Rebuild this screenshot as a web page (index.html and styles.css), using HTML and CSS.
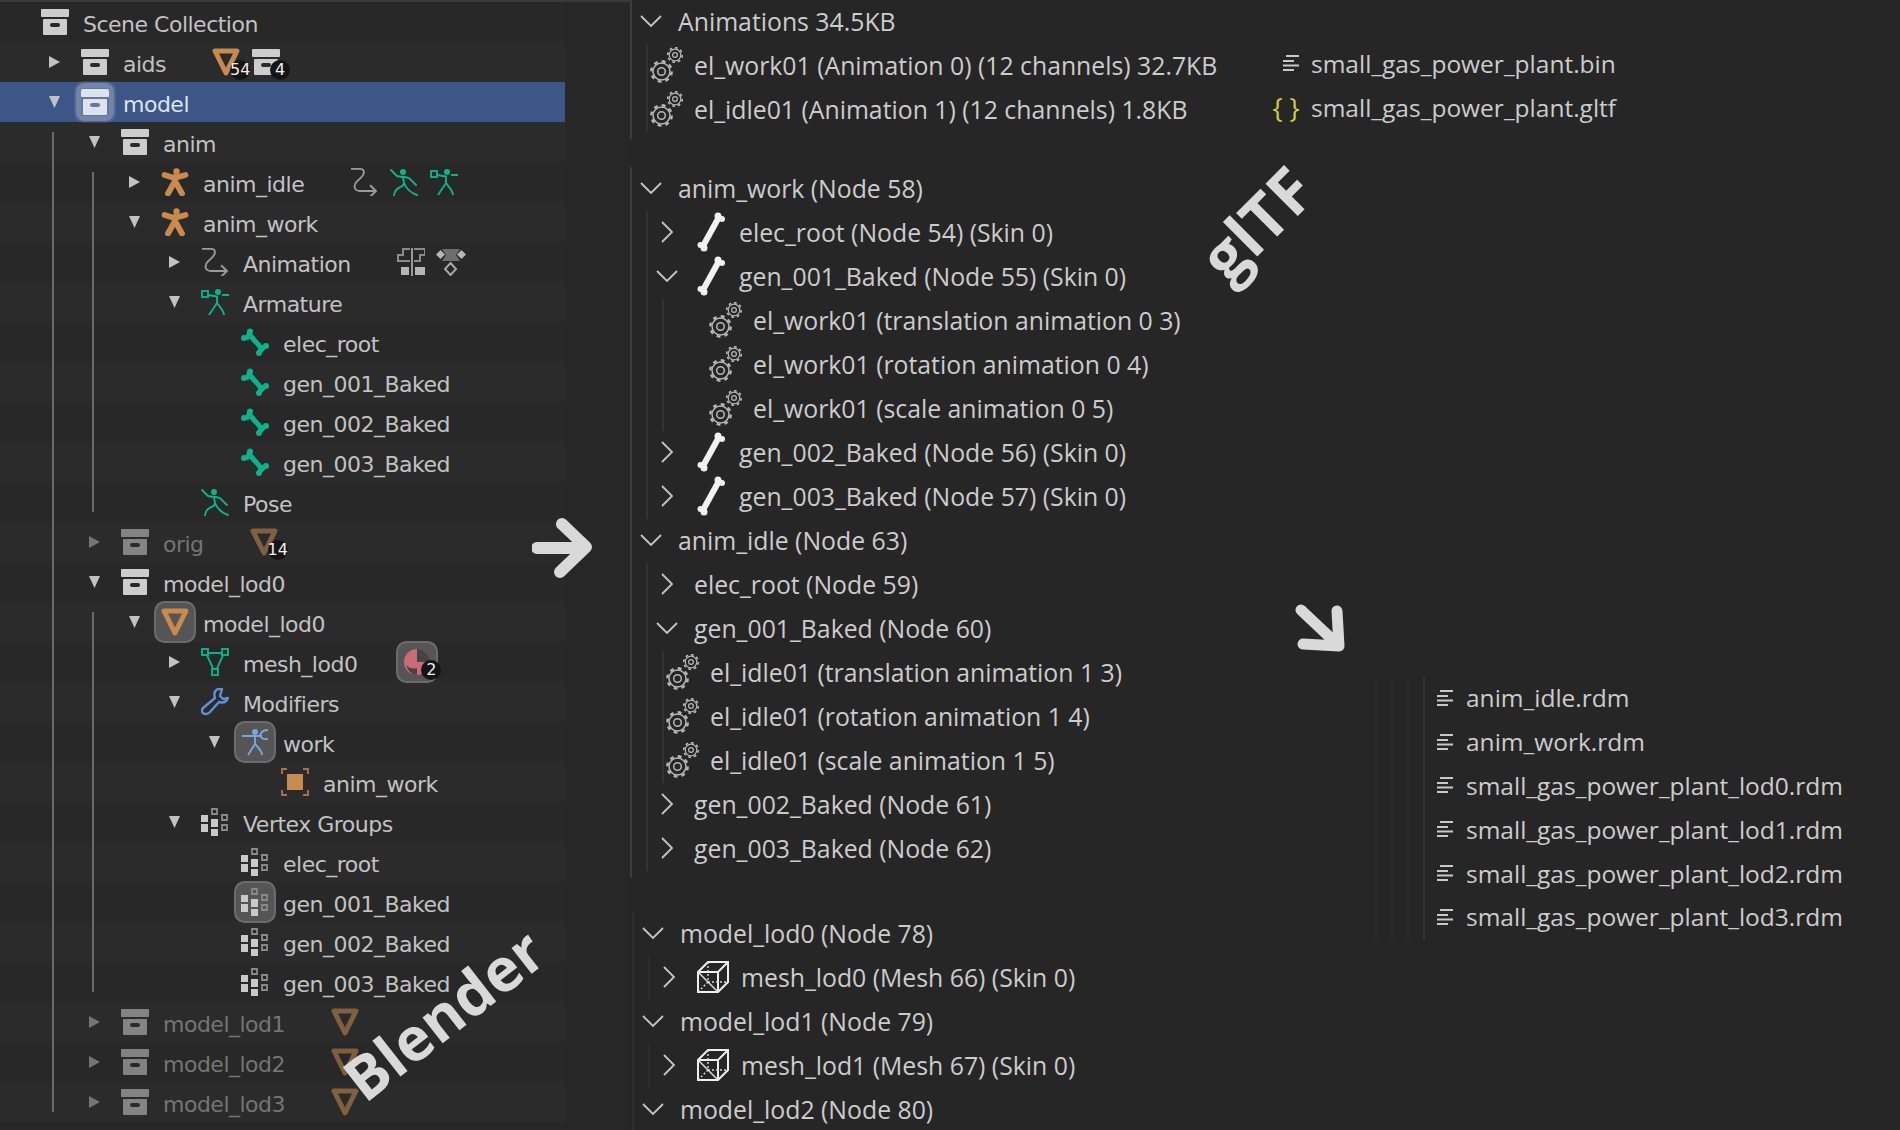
FILE: index.html
```html
<!DOCTYPE html>
<html lang="en">
<head>
    <meta charset="UTF-8">
    <title>Blender and glTF hierarchy</title>
    <link rel="stylesheet" href="styles.css">
</head>
<body>
    <svg class="defs" width="0" height="0">
        <symbol id="coll" viewBox="0 0 28 28">
            <rect x="0" y="1" width="28" height="8" rx="1" fill="currentColor"/>
            <path fill="currentColor" fill-rule="evenodd" d="M3 11H25a1 1 0 0 1 1 1V26a1 1 0 0 1-1 1H3a1 1 0 0 1-1-1V12a1 1 0 0 1 1-1ZM11 15a1.5 1.5 0 0 0 0 4h6a1.5 1.5 0 0 0 0-4Z"/>
        </symbol>
        <symbol id="obj" viewBox="0 0 28 28">
            <path d="M3 3H25L14 25Z" fill="none" stroke="#c98a4f" stroke-width="5" stroke-linejoin="round"/>
        </symbol>
        <symbol id="arm" viewBox="0 0 28 28">
            <circle cx="15.500" cy="3.500" r="3.200" fill="#c98a4f"/>
            <path d="M3.500 7L13.500 10L24.500 7M14 9V13L7 25.500M14 13L21 25.500" fill="none" stroke="#c98a4f" stroke-width="5.800" stroke-linecap="round" stroke-linejoin="round"/>
        </symbol>
        <symbol id="action" viewBox="0 0 28 28">
            <path d="M1 2H10C15 2 15 7 11 11L7 15C3 19 4 25 10 25H26M20 19L26 25L20 31" fill="none" stroke="#9a9a9a" stroke-width="1.9" stroke-linejoin="round" transform="translate(0 -1) scale(1 .96)"/>
        </symbol>
        <symbol id="pose" viewBox="0 0 28 28">
            <circle cx="13" cy="4" r="3" fill="#0cb38c"/>
            <path d="M1 2L7 8L12 9L15 9L19 10L26 17M13 9L14 15C14 19 10 18 6 22C5 24 4 25 4 28M14 15C17 22 21 25 27 27" fill="none" stroke="#0cb38c" stroke-width="1.9" stroke-linecap="round"/>
        </symbol>
        <symbol id="armdata" viewBox="0 0 28 28">
            <circle cx="17" cy="4" r="3" fill="#0cb38c"/>
            <rect x="1" y="3" width="6" height="6" fill="none" stroke="#0cb38c" stroke-width="1.9"/>
            <path d="M7 7L16 8.500M21 7H28M16 8V15L8 27M16 15C20 20 23 23 23 27" fill="none" stroke="#0cb38c" stroke-width="1.9"/>
        </symbol>
        <symbol id="bone" viewBox="0 0 28 28">
            <path d="M8 6L21 21" stroke="#0cb38c" stroke-width="5" stroke-linecap="round"/>
            <circle cx="9" cy="3.500" r="3" fill="#0cb38c"/>
            <circle cx="3" cy="10" r="3" fill="#0cb38c"/>
            <circle cx="25" cy="18" r="3" fill="#0cb38c"/>
            <circle cx="18" cy="25" r="3" fill="#0cb38c"/>
            <path d="M5 11L10 5" stroke="#0cb38c" stroke-width="5"/>
            <path d="M18 24L24 18" stroke="#0cb38c" stroke-width="5"/>
        </symbol>
        <symbol id="nla" viewBox="0 0 28 28">
            <path d="M15 0V28" stroke="#9a9a9a" stroke-width="2"/>
            <path d="M13 1H6V7H1V13H13M17 1H28V7H23V13H17" fill="none" stroke="#8a8a8a" stroke-width="2"/>
            <rect x="4" y="19" width="8" height="8" fill="#b5b5b5"/>
            <rect x="18" y="19" width="10" height="8" fill="#b5b5b5"/>
        </symbol>
        <symbol id="keys" viewBox="0 0 32 28">
            <path d="M7 1H25L21 7L25 13H7L11 7Z" fill="#6e6e6e"/>
            <path d="M5.500 2L10 6.500L5.500 11L1 6.500ZM26.500 2L31 6.500L26.500 11L22 6.500Z" fill="#b5b5b5"/>
            <path d="M15.500 15L21 21L15.500 27L10 21Z" fill="none" stroke="#a8a8a8" stroke-width="2"/>
        </symbol>
        <symbol id="mesh" viewBox="0 0 28 28">
            <path d="M5 5H23L14 25Z" fill="none" stroke="#0cb38c" stroke-width="1.900"/>
            <rect x="1" y="1" width="6" height="6" fill="#2a2a2a" stroke="#0cb38c" stroke-width="1.900"/>
            <rect x="21" y="1" width="6" height="6" fill="#2a2a2a" stroke="#0cb38c" stroke-width="1.900"/>
            <rect x="11" y="21" width="6" height="6" fill="#2a2a2a" stroke="#0cb38c" stroke-width="1.900"/>
        </symbol>
        <symbol id="wrench" viewBox="0 0 28 28">
            <path d="M17 2C13 4 13 8 14 11L2 21C0 24 1 27 5 27C7 27 8 26 9 25L18 15C21 16 25 16 27 11L22 12L19 9L21 2Z" fill="none" stroke="#5f91d3" stroke-width="2.400" stroke-linejoin="round" transform="translate(0 -1)"/>
        </symbol>
        <symbol id="armmod" viewBox="0 0 28 28">
            <circle cx="14" cy="4" r="3" fill="#7aa6de"/>
            <path d="M1 8H14M14 7V16L7 27M14 16C18 20 21 23 21 27" fill="none" stroke="#7aa6de" stroke-width="1.900"/>
            <path d="M27 2C21 2 18 6 20 9C22 12 25 11 27 11M14 8H21" fill="none" stroke="#7aa6de" stroke-width="1.900"/>
        </symbol>
        <symbol id="select" viewBox="0 0 28 28">
            <rect x="6" y="6" width="16" height="16" fill="#c98a4f"/>
            <path d="M1 6V1H6M22 1H27V6M27 22V27H22M6 27H1V22" fill="none" stroke="#a8734a" stroke-width="1.900"/>
        </symbol>
        <symbol id="vgroup" viewBox="0 0 28 28">
            <path fill="#c9c9c9" d="M0 7h7v7H0ZM0 16h7v8H0ZM10 11h7v8h-7ZM10 21h7v7h-7Z"/>
            <path fill="none" stroke="#8a8a8a" stroke-width="1.800" d="M11 1h5v5h-5ZM21 7h5v5h-5ZM21 17h5v5h-5Z"/>
        </symbol>
        <symbol id="mat" viewBox="0 0 28 28">
            <circle cx="14" cy="14" r="13" fill="#cb6a78"/>
            <path d="M14 1A13 13 0 0 1 27 14H14Z" fill="#444"/>
            <path d="M3 17C7 21 10 21 14 20V27C9 27 5 23 3 17Z" fill="#444"/>
        </symbol>
        <symbol id="wbone" viewBox="0 0 28 40">
            <path d="M22 5L6 34" stroke="#f2f2f2" stroke-width="6"/>
            <circle cx="21" cy="4" r="3.500" fill="#f2f2f2"/>
            <circle cx="25" cy="7" r="3" fill="#f2f2f2"/>
            <circle cx="3.500" cy="33" r="3" fill="#f2f2f2"/>
            <circle cx="7" cy="36" r="3.500" fill="#f2f2f2"/>
        </symbol>
        <symbol id="gears" viewBox="0 0 33 36">
            <g fill="none" stroke="#b8b8b8">
                <circle cx="11.500" cy="24.500" r="8.500" stroke-width="1.500"/>
                <circle cx="11.500" cy="24.500" r="3.800" stroke-width="1.500"/>
                <circle cx="11.500" cy="24.500" r="10.200" stroke-width="2.400" stroke-dasharray="3.800 4.200"/>
                <circle cx="25" cy="8" r="5.800" stroke-width="1.200"/>
                <circle cx="25" cy="8" r="2.400" stroke-width="1.200"/>
                <circle cx="25" cy="8" r="7.300" stroke-width="1.600" stroke-dasharray="2.700 3"/>
            </g>
        </symbol>
        <symbol id="cube" viewBox="0 0 32 32">
            <path d="M1 11L11 1H31V21L21 31H1ZM1 11H21V31M21 11L31 1" fill="none" stroke="#efefef" stroke-width="2"/>
            <path d="M1 11L21 31" fill="none" stroke="#e0e0e0" stroke-width="1.500"/>
            <path d="M11 1V21L1 31M11 21H31" fill="none" stroke="#d8d8d8" stroke-width="1.400" stroke-dasharray="2 2"/>
        </symbol>
        <symbol id="lines" viewBox="0 0 18 18">
            <path d="M4 2H17M1 7H12M1 11.500H17M1 16H12" fill="none" stroke="#c9c9c9" stroke-width="2"/>
        </symbol>
        <symbol id="chev-down" viewBox="0 0 22 12"><path d="M1 1L11 11L21 1" fill="none" stroke="#c5c5c5" stroke-width="1.800"/></symbol>
        <symbol id="chev-right" viewBox="0 0 12 22"><path d="M1 1L11 11L1 21" fill="none" stroke="#c5c5c5" stroke-width="1.800"/></symbol>
    </svg>

    <div class="page">
        <div class="outliner">
            <div class="row lv0"><span class="slot"></span><svg class="ico"><use href="#coll"/></svg><span class="name">Scene Collection</span></div>
            <div class="row lv1"><span class="slot"><i class="tri"></i></span><svg class="ico"><use href="#coll"/></svg><span class="name">aids</span>
                <span class="extras">
                    <span class="extra"><svg class="ico"><use href="#obj"/></svg><b class="badge">54</b></span>
                    <span class="extra"><svg class="ico"><use href="#coll"/></svg><b class="badge">4</b></span>
                </span></div>
            <div class="row lv1 selected"><span class="slot"><i class="tri down"></i></span><svg class="ico hl"><use href="#coll"/></svg><span class="name">model</span></div>
            <div class="row lv2"><span class="slot"><i class="tri down"></i></span><svg class="ico"><use href="#coll"/></svg><span class="name">anim</span></div>
            <div class="row lv3"><span class="slot"><i class="tri"></i></span><svg class="ico"><use href="#arm"/></svg><span class="name">anim_idle</span>
                <span class="extras">
                    <svg class="ico"><use href="#action"/></svg>
                    <svg class="ico"><use href="#pose"/></svg>
                    <svg class="ico"><use href="#armdata"/></svg>
                </span></div>
            <div class="row lv3"><span class="slot"><i class="tri down"></i></span><svg class="ico"><use href="#arm"/></svg><span class="name">anim_work</span></div>
            <div class="row lv4"><span class="slot"><i class="tri"></i></span><svg class="ico"><use href="#action"/></svg><span class="name">Animation</span>
                <span class="extras">
                    <svg class="ico"><use href="#nla"/></svg>
                    <svg class="ico wide"><use href="#keys"/></svg>
                </span></div>
            <div class="row lv4"><span class="slot"><i class="tri down"></i></span><svg class="ico"><use href="#armdata"/></svg><span class="name">Armature</span></div>
            <div class="row lv5"><span class="slot"></span><svg class="ico"><use href="#bone"/></svg><span class="name">elec_root</span></div>
            <div class="row lv5"><span class="slot"></span><svg class="ico"><use href="#bone"/></svg><span class="name">gen_001_Baked</span></div>
            <div class="row lv5"><span class="slot"></span><svg class="ico"><use href="#bone"/></svg><span class="name">gen_002_Baked</span></div>
            <div class="row lv5"><span class="slot"></span><svg class="ico"><use href="#bone"/></svg><span class="name">gen_003_Baked</span></div>
            <div class="row lv4"><span class="slot"></span><svg class="ico"><use href="#pose"/></svg><span class="name">Pose</span></div>
            <div class="row lv2 dim"><span class="slot"><i class="tri"></i></span><svg class="ico"><use href="#coll"/></svg><span class="name">orig</span>
                <span class="extras">
                    <span class="extra"><svg class="ico"><use href="#obj"/></svg><b class="badge">14</b></span>
                </span></div>
            <div class="row lv2"><span class="slot"><i class="tri down"></i></span><svg class="ico"><use href="#coll"/></svg><span class="name">model_lod0</span></div>
            <div class="row lv3"><span class="slot"><i class="tri down"></i></span><svg class="ico hl grey"><use href="#obj"/></svg><span class="name">model_lod0</span></div>
            <div class="row lv4"><span class="slot"><i class="tri"></i></span><svg class="ico"><use href="#mesh"/></svg><span class="name">mesh_lod0</span>
                <span class="extras">
                    <span class="extra"><svg class="ico hl grey"><use href="#mat"/></svg><b class="badge">2</b></span>
                </span></div>
            <div class="row lv4"><span class="slot"><i class="tri down"></i></span><svg class="ico"><use href="#wrench"/></svg><span class="name">Modifiers</span></div>
            <div class="row lv5"><span class="slot"><i class="tri down"></i></span><svg class="ico hl grey"><use href="#armmod"/></svg><span class="name">work</span></div>
            <div class="row lv6"><span class="slot"></span><svg class="ico"><use href="#select"/></svg><span class="name">anim_work</span></div>
            <div class="row lv4"><span class="slot"><i class="tri down"></i></span><svg class="ico"><use href="#vgroup"/></svg><span class="name">Vertex Groups</span></div>
            <div class="row lv5"><span class="slot"></span><svg class="ico"><use href="#vgroup"/></svg><span class="name">elec_root</span></div>
            <div class="row lv5"><span class="slot"></span><svg class="ico hl grey"><use href="#vgroup"/></svg><span class="name">gen_001_Baked</span></div>
            <div class="row lv5"><span class="slot"></span><svg class="ico"><use href="#vgroup"/></svg><span class="name">gen_002_Baked</span></div>
            <div class="row lv5"><span class="slot"></span><svg class="ico"><use href="#vgroup"/></svg><span class="name">gen_003_Baked</span></div>
            <div class="row lv2 dim"><span class="slot"><i class="tri"></i></span><svg class="ico"><use href="#coll"/></svg><span class="name">model_lod1</span><span class="extras"><svg class="ico"><use href="#obj"/></svg></span></div>
            <div class="row lv2 dim"><span class="slot"><i class="tri"></i></span><svg class="ico"><use href="#coll"/></svg><span class="name">model_lod2</span><span class="extras"><svg class="ico"><use href="#obj"/></svg></span></div>
            <div class="row lv2 dim"><span class="slot"><i class="tri"></i></span><svg class="ico"><use href="#coll"/></svg><span class="name">model_lod3</span><span class="extras"><svg class="ico"><use href="#obj"/></svg></span></div>

            <div class="guide g-model"></div>
            <div class="guide g-anim"></div>
            <div class="guide g-lod0"></div>
        </div>

        <div class="viewer">
            <div class="col-tree">
                <div class="tree sec-anims">
                    <div class="vrow"><span class="chev"><svg class="chevron"><use href="#chev-down"/></svg></span><span>Animations 34.5KB</span></div>
                    <div class="kids">
                        <div class="vrow"><svg class="gears"><use href="#gears"/></svg><span>el_work01 (Animation 0) (12 channels) 32.7KB</span></div>
                        <div class="vrow"><svg class="gears"><use href="#gears"/></svg><span>el_idle01 (Animation 1) (12 channels) 1.8KB</span></div>
                    </div>
                </div>

                <div class="tree sec-nodes">
                    <div class="vrow"><span class="chev"><svg class="chevron"><use href="#chev-down"/></svg></span><span>anim_work (Node 58)</span></div>
                    <div class="kids">
                        <div class="vrow"><span class="chev"><svg class="chevron"><use href="#chev-right"/></svg></span><span class="vico"><svg class="wbone"><use href="#wbone"/></svg></span><span>elec_root (Node 54) (Skin 0)</span></div>
                        <div class="vrow"><span class="chev"><svg class="chevron"><use href="#chev-down"/></svg></span><span class="vico"><svg class="wbone"><use href="#wbone"/></svg></span><span>gen_001_Baked (Node 55) (Skin 0)</span></div>
                        <div class="kids deep">
                            <div class="vrow"><svg class="gears"><use href="#gears"/></svg><span>el_work01 (translation animation 0 3)</span></div>
                            <div class="vrow"><svg class="gears"><use href="#gears"/></svg><span>el_work01 (rotation animation 0 4)</span></div>
                            <div class="vrow"><svg class="gears"><use href="#gears"/></svg><span>el_work01 (scale animation 0 5)</span></div>
                        </div>
                        <div class="vrow"><span class="chev"><svg class="chevron"><use href="#chev-right"/></svg></span><span class="vico"><svg class="wbone"><use href="#wbone"/></svg></span><span>gen_002_Baked (Node 56) (Skin 0)</span></div>
                        <div class="vrow"><span class="chev"><svg class="chevron"><use href="#chev-right"/></svg></span><span class="vico"><svg class="wbone"><use href="#wbone"/></svg></span><span>gen_003_Baked (Node 57) (Skin 0)</span></div>
                    </div>
                    <div class="vrow"><span class="chev"><svg class="chevron"><use href="#chev-down"/></svg></span><span>anim_idle (Node 63)</span></div>
                    <div class="kids">
                        <div class="vrow"><span class="chev"><svg class="chevron"><use href="#chev-right"/></svg></span><span>elec_root (Node 59)</span></div>
                        <div class="vrow"><span class="chev"><svg class="chevron"><use href="#chev-down"/></svg></span><span>gen_001_Baked (Node 60)</span></div>
                        <div class="kids">
                            <div class="vrow"><svg class="gears"><use href="#gears"/></svg><span>el_idle01 (translation animation 1 3)</span></div>
                            <div class="vrow"><svg class="gears"><use href="#gears"/></svg><span>el_idle01 (rotation animation 1 4)</span></div>
                            <div class="vrow"><svg class="gears"><use href="#gears"/></svg><span>el_idle01 (scale animation 1 5)</span></div>
                        </div>
                        <div class="vrow"><span class="chev"><svg class="chevron"><use href="#chev-right"/></svg></span><span>gen_002_Baked (Node 61)</span></div>
                        <div class="vrow"><span class="chev"><svg class="chevron"><use href="#chev-right"/></svg></span><span>gen_003_Baked (Node 62)</span></div>
                    </div>
                </div>

                <div class="tree sec-models">
                    <div class="vrow"><span class="chev"><svg class="chevron"><use href="#chev-down"/></svg></span><span>model_lod0 (Node 78)</span></div>
                    <div class="kids">
                        <div class="vrow"><span class="chev"><svg class="chevron"><use href="#chev-right"/></svg></span><span class="vico"><svg class="cube"><use href="#cube"/></svg></span><span>mesh_lod0 (Mesh 66) (Skin 0)</span></div>
                    </div>
                    <div class="vrow"><span class="chev"><svg class="chevron"><use href="#chev-down"/></svg></span><span>model_lod1 (Node 79)</span></div>
                    <div class="kids">
                        <div class="vrow"><span class="chev"><svg class="chevron"><use href="#chev-right"/></svg></span><span class="vico"><svg class="cube"><use href="#cube"/></svg></span><span>mesh_lod1 (Mesh 67) (Skin 0)</span></div>
                    </div>
                    <div class="vrow"><span class="chev"><svg class="chevron"><use href="#chev-down"/></svg></span><span>model_lod2 (Node 80)</span></div>
                </div>
            </div>

            <div class="col-files">
                <div class="files-top">
                    <div class="vrow"><span class="fico"><svg class="lines"><use href="#lines"/></svg></span><span>small_gas_power_plant.bin</span></div>
                    <div class="vrow"><span class="fico braces">{&nbsp;}</span><span>small_gas_power_plant.gltf</span></div>
                </div>
                <div class="files-rdm">
                    <div class="indent"><div class="indent"><div class="indent"><div class="indent last">
                        <div class="frow"><svg class="lines"><use href="#lines"/></svg><span>anim_idle.rdm</span></div>
                        <div class="frow"><svg class="lines"><use href="#lines"/></svg><span>anim_work.rdm</span></div>
                        <div class="frow"><svg class="lines"><use href="#lines"/></svg><span>small_gas_power_plant_lod0.rdm</span></div>
                        <div class="frow"><svg class="lines"><use href="#lines"/></svg><span>small_gas_power_plant_lod1.rdm</span></div>
                        <div class="frow"><svg class="lines"><use href="#lines"/></svg><span>small_gas_power_plant_lod2.rdm</span></div>
                        <div class="frow"><svg class="lines"><use href="#lines"/></svg><span>small_gas_power_plant_lod3.rdm</span></div>
                    </div></div></div></div>
                </div>
            </div>
        </div>

        <!-- hand added labels on top of the screenshots -->
        <div class="note note-blender">Blender</div>
        <div class="note note-gltf">glTF</div>
        <svg class="arrow arrow-right" viewBox="0 0 60 60"><path d="M5 30H52M30 6L54 29L28 54"/></svg>
        <svg class="arrow arrow-down" viewBox="0 0 50 50"><path d="M6 6L41 39M42 7L44 42L8 40"/></svg>
    </div>
</body>
</html>
```
FILE: styles.css
```css
* {
    box-sizing: border-box;
}
html, body {
    margin: 0;
    height: 100%;
    overflow: hidden;
    background: #262626;
}
.defs {
    position: absolute;
}
.page {
    position: relative;
    display: flex;
    height: 1130px;
    overflow: hidden;
}

/* blender outliner */
.outliner {
    position: relative;
    flex: none;
    width: 630px;
    padding: 0 65px 0 0;
    background: #272727;
    border-top: 2px solid #3a3a3a;
    font-family: "DejaVu Sans", sans-serif;
    font-size: 22px;
    letter-spacing: -0.5px;
    color: #c2c2c2;
}
.row {
    display: flex;
    align-items: center;
    height: 40px;
    background: #282828;
}
.row:nth-of-type(even) {
    background: #2b2b2b;
}
.row.selected {
    background: #3c5688;
    color: #dde3ec;
}
.row.selected .ico {
    color: #dde3ec;
}
.lv0 { padding-left: 0; }
.lv1 { padding-left: 40px; }
.lv2 { padding-left: 80px; }
.lv3 { padding-left: 120px; }
.lv4 { padding-left: 160px; }
.lv5 { padding-left: 200px; }
.lv6 { padding-left: 240px; }
.slot {
    flex: none;
    width: 41px;
    padding-left: 9px;
}
.tri {
    display: block;
    width: 11px;
    height: 12px;
    background: #c2c2c2;
    clip-path: polygon(0 0, 100% 50%, 0 100%);
}
.tri.down {
    clip-path: polygon(0 0, 100% 0, 50% 100%);
}
.ico {
    flex: none;
    width: 28px;
    height: 28px;
    color: #cdcdcd;
}
.ico.wide {
    width: 32px;
    margin-left: -2px;
}
.ico.hl {
    border-radius: 4px;
    background: rgba(255, 255, 255, 0.2);
    box-shadow: 0 0 0 5px rgba(255, 255, 255, 0.2), 0 0 0 7px rgba(255, 255, 255, 0.1);
}
.ico.grey {
    background: #555;
    box-shadow: 0 0 0 5px #555, 0 0 0 7px #6b6b6b;
}
.name {
    margin-left: 14px;
    padding-top: 5px;
    white-space: nowrap;
}
.extras {
    display: flex;
    gap: 12px;
    margin-left: 46px;
}
.extra {
    position: relative;
    display: block;
    width: 28px;
    height: 28px;
}
.badge {
    position: absolute;
    top: 12px;
    right: -10px;
    width: 20px;
    height: 20px;
    border-radius: 50%;
    background: #151515;
    color: #f0f0f0;
    font-size: 16px;
    font-weight: normal;
    letter-spacing: 0;
    line-height: 20px;
    text-align: center;
}
.dim {
    color: #757575;
}
.dim .tri {
    background: #757575;
}
.dim .ico {
    opacity: 0.55;
}
.guide {
    position: absolute;
    width: 2px;
    background: #6a6a6a;
}
.g-model { left: 52px; top: 130px; height: 980px; }
.g-anim { left: 92px; top: 170px; height: 340px; }
.g-lod0 { left: 92px; top: 610px; height: 380px; }

/* gltf viewer */
.viewer {
    display: flex;
    flex: 1;
    font-family: "Open Sans", sans-serif;
    font-size: 24.800px;
    color: #cccccc;
    white-space: nowrap;
}
.col-tree {
    flex: none;
    width: 650px;
}
.col-files {
    font-size: 24.500px;
}
.tree {
    border-left: 2px solid #3c3c3c;
    padding-bottom: 7px;
}
.sec-nodes {
    margin-top: 28px;
}
.sec-models {
    margin: 34px 0 0 2px;
    border-color: #2e2e2e;
}
.vrow {
    display: flex;
    align-items: center;
    height: 44px;
    padding: 0 0 2px 2px;
}
.chev {
    display: flex;
    flex: none;
    align-items: center;
    justify-content: center;
    width: 33px;
    margin-right: 11px;
}
.chevron {
    width: 22px;
    height: 22px;
}
.kids {
    margin-left: 14px;
    border-left: 2px solid #323232;
}
.kids.deep {
    padding-left: 43px;
}
.gears {
    flex: none;
    width: 33px;
    height: 36px;
    margin-right: 11px;
}
.vico {
    display: flex;
    flex: none;
    justify-content: center;
    width: 34px;
    margin-right: 11px;
}
.wbone {
    width: 28px;
    height: 40px;
}
.cube {
    width: 32px;
    height: 32px;
}
.sec-models .kids {
    border-color: #2c2c2c;
}
.files-top {
    margin-top: 42px;
}
.fico {
    display: flex;
    flex: none;
    justify-content: center;
    width: 18px;
    margin-right: 11px;
}
.braces {
    position: relative;
    left: -5px;
    color: #cbcb41;
    font-size: 27px;
    line-height: 1;
    letter-spacing: 0;
}
.lines {
    flex: none;
    width: 18px;
    height: 18px;
}
.files-rdm {
    margin: 547px 0 0 95px;
}
.indent {
    padding-left: 14px;
    border-left: 2px solid #2c2c2c;
}
.indent.last {
    border-color: #343434;
    padding-left: 11px;
}
.frow {
    display: flex;
    align-items: center;
    gap: 12px;
    height: 43.800px;
    padding-bottom: 2px;
}

/* labels over the screenshots */
.note {
    position: absolute;
    color: #d9d9d9;
    font-family: "Open Sans", sans-serif;
    font-weight: 700;
    white-space: nowrap;
}
.note-blender {
    left: 443px;
    top: 1014px;
    font-size: 60px;
    transform: translate(-50%, -50%) rotate(-38deg);
}
.note-gltf {
    left: 1256px;
    top: 223px;
    font-size: 64px;
    transform: translate(-50%, -50%) rotate(-45deg);
}
.arrow {
    position: absolute;
    fill: none;
    stroke: #d9d9d9;
    stroke-linecap: round;
    stroke-linejoin: round;
}
.arrow-right {
    left: 532px;
    top: 518px;
    width: 60px;
    height: 60px;
    stroke-width: 12;
}
.arrow-down {
    left: 1295px;
    top: 604px;
    width: 50px;
    height: 50px;
    stroke-width: 11;
}
```
